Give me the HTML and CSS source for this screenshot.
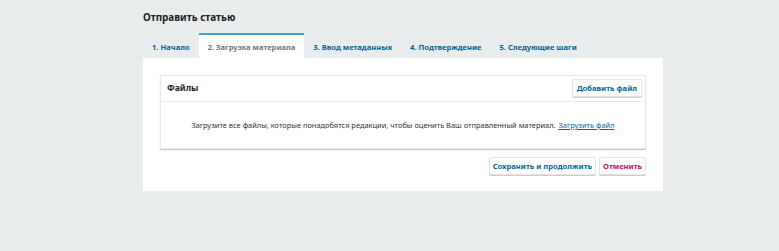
FILE: index.html
```html
<!DOCTYPE html>
<html lang="ru">
<head>
<meta charset="utf-8">
<title>Отправить статью</title>
<link rel="stylesheet" href="styles.css">
</head>
<body>
<div class="page">
  <h1 class="title">Отправить статью</h1>
  <div class="tabs">
    <a class="tab">1. Начало</a>
    <a class="tab active">2. Загрузка материала</a>
    <a class="tab">3. Ввод метаданных</a>
    <a class="tab">4. Подтверждение</a>
    <a class="tab">5. Следующие шаги</a>
  </div>
  <div class="panel">
    <div class="card">
      <div class="card-head">
        <span class="card-title">Файлы</span>
        <button class="btn">Добавить файл</button>
      </div>
      <div class="card-body">
        Загрузите все файлы, которые понадобятся редакции, чтобы оценить Ваш отправленный материал. <a class="link">Загрузить файл</a>
      </div>
    </div>
    <div class="actions">
      <button class="btn">Сохранить и продолжить</button>
      <button class="btn cancel">Отменить</button>
    </div>
  </div>
</div>
</body>
</html>
```

FILE: styles.css
```css
html, body {
  margin: 0;
  padding: 0;
  background: #e9ecec;
  font-family: "Noto Sans", "Open Sans", sans-serif;
  color: #222;
}
.page {
  width: 520px;
  margin-left: 143px;
  padding-top: 9px;
}
.title {
  margin: 0;
  font-size: 9.9px;
  font-weight: 700;
  line-height: 16px;
  height: 24px;
  color: #222;
}
.tabs {
  display: flex;
  height: 25px;
}
.tab {
  display: flex;
  align-items: center;
  flex-shrink: 0;
  white-space: nowrap;
  padding: 0 9px;
  font-size: 7.6px;
  font-weight: 700;
  color: #006798;
  border-top: 2px solid transparent;
  box-sizing: border-box;
  height: 25px;
}
.tab.active {
  background: #fff;
  color: #777;
  border-top-color: #3fa3da;
}
.panel {
  background: #fff;
  padding: 17px 17px 16px 17px;
}
.card {
  border: 1px solid #e8e8e8;
  box-shadow: 0 1px 1px #ccc;
}
.card-head {
  display: flex;
  align-items: center;
  justify-content: space-between;
  height: 24px;
  padding: 0 3px 1px 6px;
  border-bottom: 1px solid #eee;
}
.card-title {
  font-size: 8.6px;
  font-weight: 700;
}
.btn {
  font-family: inherit;
  font-size: 7.6px;
  font-weight: 700;
  color: #006798;
  background: #fff;
  border: 1px solid #e4e4e4;
  border-radius: 2px;
  box-shadow: 0 1px 0 #ccc;
  height: 18px;
  padding: 0 4px;
  line-height: 16px;
  white-space: nowrap;
  cursor: pointer;
}
.actions .btn {
  padding: 0 3px;
}
.card-body {
  height: 46px;
  display: flex;
  align-items: center;
  justify-content: center;
  white-space: nowrap;
  font-size: 7.45px;
  color: #333;
}
.link {
  color: #006798;
  text-decoration: underline;
  margin-left: 3px;
}
.actions {
  display: flex;
  justify-content: flex-end;
  gap: 3px;
  margin-top: 8px;
}
.cancel {
  color: #d00a6c;
}
```
